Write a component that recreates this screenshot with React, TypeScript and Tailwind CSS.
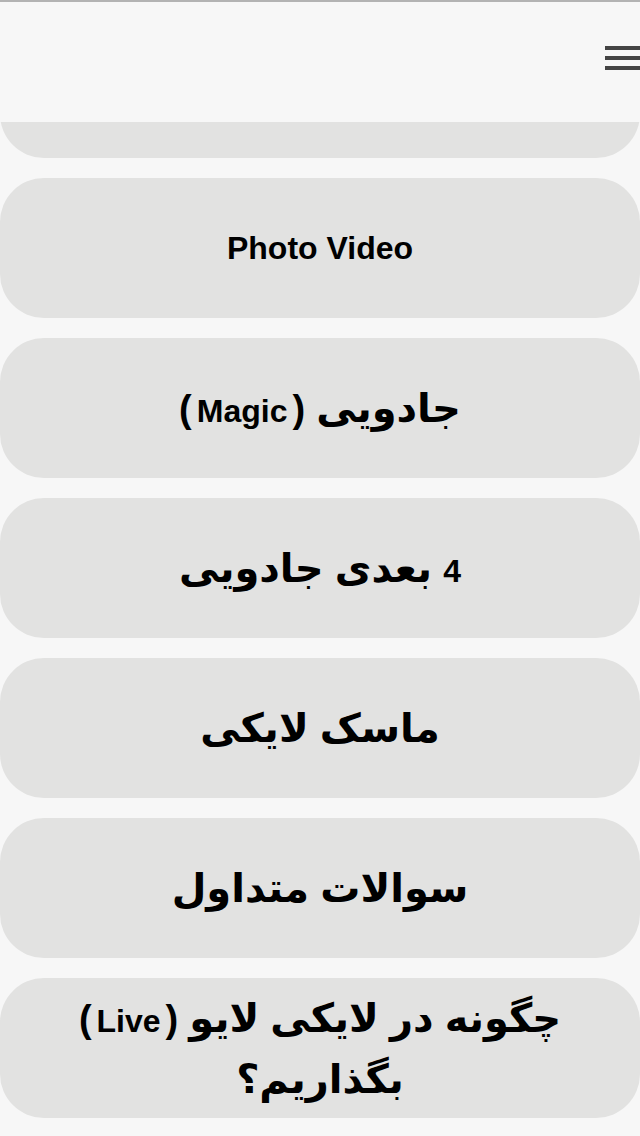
import React from "react";

const font = { fontFamily: '"Liberation Sans", "DejaVu Sans", sans-serif' };

function Card({ children, className = "" }: { children?: React.ReactNode; className?: string }) {
  return (
    <div className={"h-[140px] shrink-0 rounded-[44px] bg-[#e2e2e1] flex items-center justify-center overflow-hidden " + className}>
      {children}
    </div>
  );
}

function Latin({ word }: { word: string }) {
  return (
    <span dir="ltr" className="inline-flex items-baseline gap-[5px] align-baseline">
      <span className="text-[38px]">(</span>
      <span className="text-[32px]">{word}</span>
      <span className="text-[38px]">)</span>
    </span>
  );
}

export default function App() {
  return (
    <div className="w-[640px] h-[1136px] bg-[#f7f7f7] overflow-hidden flex flex-col" style={font}>
      <div className="h-[2px] bg-[#b3b3b3] shrink-0" />
      <header className="h-[120px] shrink-0 bg-[#f7f7f7] flex items-start justify-end overflow-hidden relative z-10">
        <div className="mt-[44px] mr-[-6px] w-[41px] flex flex-col gap-[6px]">
          <div className="h-[4px] bg-[#444444]" />
          <div className="h-[4px] bg-[#444444]" />
          <div className="h-[4px] bg-[#444444]" />
        </div>
      </header>
      <main className="flex-1 overflow-hidden">
        <div className="flex flex-col gap-[20px] mt-[-104px]">
          <Card />
          <Card>
            <span className="text-[32px] font-bold text-black">Photo Video</span>
          </Card>
          <Card>
            <span className="text-[40px] font-bold text-black" dir="rtl">
              جادویی <Latin word="Magic" />
            </span>
          </Card>
          <Card>
            <span className="text-[40px] font-bold text-black" dir="rtl">
              <span className="text-[32px]">4</span> بعدی جادویی
            </span>
          </Card>
          <Card>
            <span className="text-[40px] font-bold text-black" dir="rtl">ماسک لایکی</span>
          </Card>
          <Card>
            <span className="text-[40px] font-bold text-black" dir="rtl">سوالات متداول</span>
          </Card>
          <Card className="py-[14px] items-stretch">
            <div className="h-full w-full overflow-hidden flex items-center justify-center">
              <div className="text-[40px] leading-[58px] font-bold text-black text-center px-[50px]" dir="rtl">
                چگونه در لایکی لایو <Latin word="Live" /> بگذاریم؟
              </div>
            </div>
          </Card>
        </div>
      </main>
    </div>
  );
}
